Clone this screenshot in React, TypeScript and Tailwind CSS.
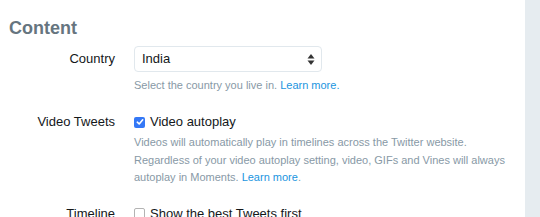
import React from "react";

export default function App() {
  return (
    <div
      className="flex w-[540px] h-[217px] overflow-hidden bg-white"
      style={{ fontFamily: '"Liberation Sans", Arial, sans-serif' }}
    >
      <div className="w-[525px] pl-[9px] pt-[17px]">
        <h2 className="text-[18px] leading-[22px] font-bold text-[#66757f]">Content</h2>

        <div className="mt-[7px] grid grid-cols-[106px_1fr] gap-x-[19px]">
          <div className="flex h-[26px] items-center justify-end text-[13px] text-[#14171a]">Country</div>
          <div>
            <div className="flex h-[26px] w-[188px] items-center justify-between rounded-[4px] border border-[#e1e8ed] pl-[7px] pr-[6px] text-[13px] text-[#14171a]">
              <span>India</span>
              <svg width="8" height="13" viewBox="0 0 8 13">
                <path d="M4 1 L7.5 5.5 H0.5 Z" fill="#333" />
                <path d="M4 12 L7.5 7.5 H0.5 Z" fill="#333" />
              </svg>
            </div>
            <p className="mt-[4px] text-[11px] leading-[18px] text-[#8899a6]">
              Select the country you live in. <span className="text-[#1b95e0]">Learn more.</span>
            </p>
          </div>

          <div className="mt-[19px] flex h-[18px] items-center justify-end text-[13px] text-[#14171a]">Video Tweets</div>
          <div className="mt-[19px]">
            <label className="flex h-[18px] items-center gap-[5px] text-[13px] text-[#14171a]">
              <span className="flex h-[11px] w-[11px] items-center justify-center rounded-[2px] bg-[#3478f6]">
                <svg width="8" height="8" viewBox="0 0 8 8">
                  <path d="M1.3 4.2 L3.2 6 L6.7 1.8" stroke="white" strokeWidth="1.6" fill="none" strokeLinecap="round" strokeLinejoin="round" />
                </svg>
              </span>
              Video autoplay
            </label>
            <p className="mt-[3px] w-[380px] text-[11px] leading-[17.5px] text-[#8899a6]">
              Videos will automatically play in timelines across the Twitter website. Regardless of your video autoplay setting, video, GIFs and Vines will always autoplay in Moments. <span className="text-[#1b95e0]">Learn more</span>.
            </p>
          </div>

          <div className="mt-[18px] flex h-[18px] items-center justify-end text-[13px] text-[#14171a]">Timeline</div>
          <div className="mt-[18px]">
            <label className="flex h-[18px] items-center gap-[5px] text-[13px] text-[#14171a]">
              <span className="h-[11px] w-[11px] rounded-[2px] border border-[#b3b3b3] bg-white" />
              Show the best Tweets first
            </label>
          </div>
        </div>
      </div>
      <div className="w-[15px] bg-[#e6ecf0]" />
    </div>
  );
}
